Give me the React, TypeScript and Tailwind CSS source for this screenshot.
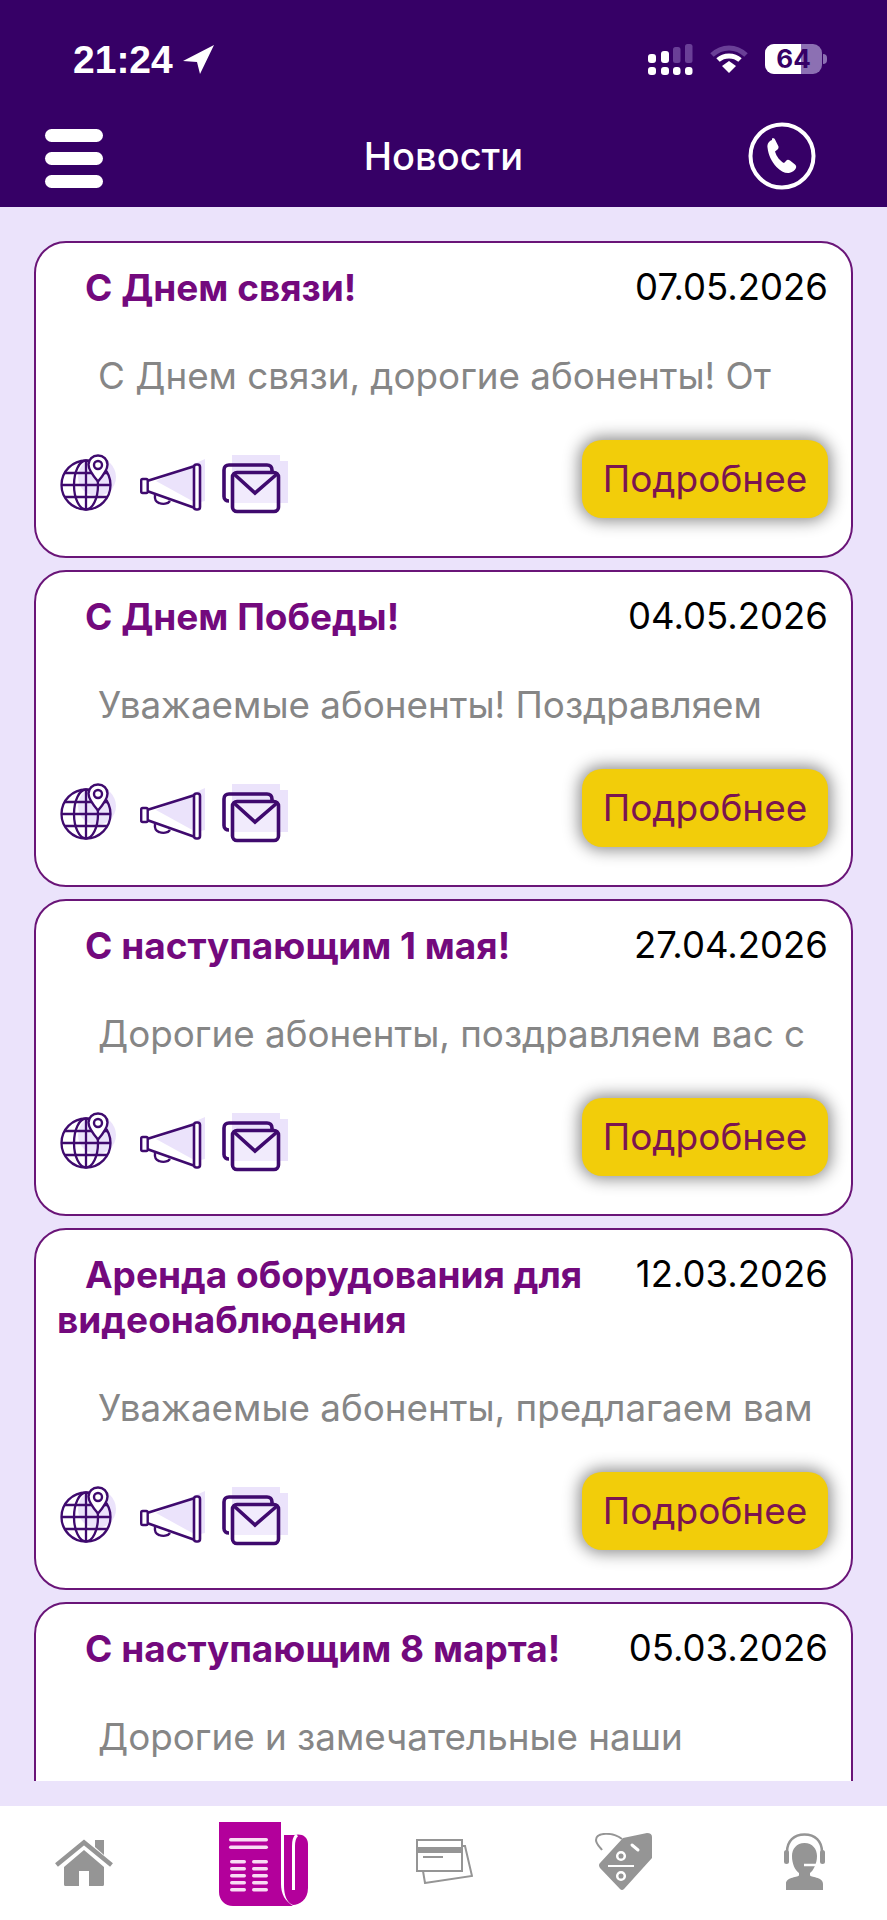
import React from "react";

const INK = "#3f0a6e";
const GREY = "#959595";

function Globe() {
  return (
    <svg width="56" height="58" viewBox="0 0 56 58" fill="none" className="mt-[1px] shrink-0">
      <circle cx="37" cy="23" r="19" fill="#ebe3fb" />
      <g stroke={INK} strokeWidth="2.300">
        <circle cx="26" cy="31" r="24.500" />
        <ellipse cx="26" cy="31" rx="12" ry="24.500" />
        <path d="M26 6.500v49M1.500 31h49M5 19h42M5 43h42" />
      </g>
      <path d="M38 1.500c-5.500 0-9.500 4-9.500 9 0 6 9.500 17 9.500 17s9.500-11 9.500-17c0-5-4-9-9.500-9z" fill="#fff" stroke={INK} strokeWidth="2.400" />
      <circle cx="38" cy="11" r="4" fill="#fff" stroke={INK} strokeWidth="2.400" />
    </svg>
  );
}

function Horn() {
  return (
    <svg width="66" height="56" viewBox="0 0 66 56" fill="none" className="mt-[4px] shrink-0">
      <path d="M16 24 L65 2 V44 L56 46 Z" fill="#ebe3fb" />
      <path d="M7 24 L55 9 M7 34 L55 51" stroke={INK} strokeWidth="2.600" />
      <rect x="1.200" y="22" width="6.500" height="14" rx="1.500" fill="#fff" stroke={INK} strokeWidth="2.400" />
      <rect x="54" y="7.500" width="6" height="45" rx="2.500" fill="#fff" stroke={INK} strokeWidth="2.600" />
      <path d="M15 38c-.5 4 1 7 4 8 4 1.500 9 1 11-2" stroke={INK} strokeWidth="2.400" />
    </svg>
  );
}

function Mail() {
  return (
    <svg width="70" height="62" viewBox="0 0 70 62" fill="none" className="shrink-0">
      <path d="M12 2H60V8H68V50H14V36H12Z" fill="#ebe3fb" />
      <path d="M9 48c-3 0-5-1.500-5-4.500V17c0-3 2-5 5-5h38c3 0 5 2 5 5v2" stroke={INK} strokeWidth="3.600" />
      <rect x="12.500" y="19.500" width="46" height="39" rx="4.500" fill="#fff" fillOpacity="0.3" stroke={INK} strokeWidth="3.600" />
      <path d="M14 21 L35 40 L57 21" stroke={INK} strokeWidth="3.600" />
    </svg>
  );
}

type News = { title: string; date: string; body: string; belowFold?: boolean };

function NewsCard({ title, date, body, belowFold }: News) {
  return (
    <article className="shrink-0 rounded-[32px] border-2 border-[#6a1578] bg-white pl-[21px] pr-[23px] pt-[22px] pb-[38px]">
      <div className="flex items-start justify-between gap-[12px]">
        <h2 className="indent-[28px] text-[37px] leading-[45px] font-bold text-[#73097d]">{title}</h2>
        <span className="shrink-0 text-[36.5px] leading-[45px] text-black">{date}</span>
      </div>
      <p className="mt-[43px] overflow-hidden whitespace-nowrap pl-[41px] text-[36.8px] leading-[45px] text-[#868686]">{body}</p>
      {belowFold ? (
        <div className="mt-[42px] flex justify-end">
          <div className="h-[78px] w-[246px] rounded-[20px] bg-[#f2cd0a] shadow-[0_0_16px_3px_rgba(0,0,0,0.45)]" />
        </div>
      ) : (
        <div className="mt-[42px] flex items-start justify-between">
          <div className="mt-[13px] flex items-start gap-[24px] pl-[3px]">
            <Globe />
            <div className="flex items-start gap-[14px]">
              <Horn />
              <Mail />
            </div>
          </div>
          <button className="flex h-[78px] w-[246px] items-center justify-center rounded-[20px] bg-[#f2cd0a] text-[37px] text-[#7b1450] shadow-[0_0_16px_3px_rgba(0,0,0,0.45)]">
            Подробнее
          </button>
        </div>
      )}
    </article>
  );
}

const NEWS: News[] = [
  { title: "С Днем связи!", date: "07.05.2026", body: "С Днем связи, дорогие абоненты! От" },
  { title: "С Днем Победы!", date: "04.05.2026", body: "Уважаемые абоненты! Поздравляем" },
  { title: "С наступающим 1 мая!", date: "27.04.2026", body: "Дорогие абоненты, поздравляем вас с" },
  { title: "Аренда оборудования для видеонаблюдения", date: "12.03.2026", body: "Уважаемые абоненты, предлагаем вам" },
  { title: "С наступающим 8 марта!", date: "05.03.2026", body: "Дорогие и замечательные наши", belowFold: true },
];

function StatusIcons() {
  return (
    <div className="flex items-center gap-[17px]">
      <svg width="45" height="31" viewBox="0 0 45 31" fill="#fff">
        <rect x="0" y="10" width="8" height="9" rx="3" />
        <rect x="13" y="7" width="8" height="12" rx="3" />
        <rect x="25" y="3" width="7.500" height="16" rx="2.500" fill="#6a3f97" />
        <rect x="37" y="0" width="7.500" height="19" rx="2.500" fill="#6a3f97" />
        <rect x="0" y="23" width="8" height="8" rx="3" />
        <rect x="13" y="23" width="8" height="8" rx="3" />
        <rect x="25" y="23" width="7.500" height="8" rx="3" />
        <rect x="37" y="23" width="7.500" height="8" rx="3" />
      </svg>
      <svg width="38" height="28" viewBox="0 0 38 28" fill="none">
        <path d="M2 10C12 0.500 26 0.500 36 10" stroke="#6a3f97" strokeWidth="5" />
        <path d="M8 15c6-5.500 16-5.500 22 0" stroke="#fff" strokeWidth="5" />
        <path d="M12 21l7-5 7 5-7 7z" fill="#fff" />
      </svg>
      <div className="flex items-center gap-[1px]">
        <div className="relative flex h-[30px] w-[57px] items-center justify-center overflow-hidden rounded-[9px] bg-[#8c70b3]">
          <div className="absolute inset-y-0 left-0 w-[36px] bg-white" />
          <span className="relative text-[26px] font-bold leading-none text-[#360066]">64</span>
        </div>
        <div className="h-[10px] w-[4px] rounded-r-full bg-[#8c70b3]" />
      </div>
    </div>
  );
}

function Home() {
  return (
    <svg width="58" height="47" viewBox="0 0 58 47" fill={GREY}>
      <path d="M40 1h9v15l-9-8z" />
      <path d="M1.500 26L29 3.500 56.500 26" fill="none" stroke={GREY} strokeWidth="4.500" />
      <path fillRule="evenodd" d="M9 28L29 11l20 17v17.500a1.500 1.500 0 0 1-1.500 1.500H34V32H24v15H10.500A1.500 1.500 0 0 1 9 45.500z" />
    </svg>
  );
}

function Paper() {
  return (
    <svg width="90" height="85" viewBox="0 0 90 85" fill="#b3009b">
      <path d="M0 0H62V62C62 72 66 79 74 84H14C6 84 0 78 0 70Z" />
      <path d="M65 13H75C82 11 89 14 89 22V66C89 78 80 83 74 83C68 81 65 73 65 64Z" />
      <path d="M78 13C74.500 16 74.500 20 74.500 24V68" fill="none" stroke="#fff" strokeWidth="3" />
      <g fill="#f9dcf4">
        <rect x="10" y="16" width="39" height="3.500" rx="1.700" />
        <rect x="10" y="23.500" width="39" height="3.500" rx="1.700" />
        {[38, 45, 52, 59, 66].map((y) => (
          <React.Fragment key={y}>
            <rect x="11" y={y} width="16" height="3.500" rx="1.700" />
            <rect x="33" y={y} width="16" height="3.500" rx="1.700" />
          </React.Fragment>
        ))}
      </g>
    </svg>
  );
}

function Cards() {
  return (
    <svg width="57" height="45" viewBox="0 0 57 45" fill="none" stroke={GREY} strokeWidth="2">
      <rect x="1" y="1" width="45" height="31" />
      <rect x="1" y="8" width="45" height="6" fill={GREY} stroke="none" />
      <path d="M7 18h20" />
      <path d="M46 7h3l7 30-47 7-2-12" />
    </svg>
  );
}

function Tag() {
  return (
    <svg width="58" height="58" viewBox="0 0 58 58" fill="none">
      <path fill={GREY} d="M28 5L52 0Q57 0 57 4V25L29 56Q27 58 25 56L5 35Q3 32 5 30Z" />
      <circle cx="26" cy="23" r="3.800" stroke="#fff" strokeWidth="2.500" />
      <circle cx="26" cy="43" r="3.800" stroke="#fff" strokeWidth="2.500" />
      <path d="M13 33h26" stroke="#fff" strokeWidth="2" />
      <path d="M37 12l6 5" stroke="#fff" strokeWidth="3" strokeLinecap="round" />
      <path d="M27 6C18-1 1-1 1 7c0 4 4 7 6 10" stroke={GREY} strokeWidth="2" />
    </svg>
  );
}

function Agent() {
  return (
    <svg width="41" height="57" viewBox="0 0 41 57" fill="none">
      <path d="M3 28V19C3 8 10 1.500 20.500 1.500S38 8 38 19v9" stroke={GREY} strokeWidth="2.500" />
      <rect x="0" y="17" width="5" height="14" rx="2.500" fill={GREY} />
      <rect x="36" y="17" width="5" height="14" rx="2.500" fill={GREY} />
      <path fill={GREY} d="M20.500 10c8 0 12.500 6 12.500 13 0 8-4 15-7 17v2c0 3 13 1 13 9v6H2v-6c0-8 13-6 13-9v-2c-4-3-7-9-7-17 0-7 4.500-13 12.500-13z" />
      <path d="M20 32h12" stroke="#fff" strokeWidth="2.500" />
    </svg>
  );
}

export default function App() {
  return (
    <div className="flex h-[1920px] w-[887px] flex-col overflow-hidden bg-[#ebe3fb] font-['Inter','Liberation_Sans',sans-serif]">
      <header className="flex h-[207px] shrink-0 flex-col bg-[#360066] text-white">
        <div className="flex h-[117px] items-center justify-between pl-[73px] pr-[60px] pt-[1px]">
          <div className="flex items-center gap-[10px]">
            <span className="font-['Liberation_Sans',sans-serif] text-[39px] font-bold leading-none">21:24</span>
            <svg width="31" height="29" viewBox="0 0 31 29" fill="#fff">
              <path d="M31 0L0 16l14 1 3 12z" />
            </svg>
          </div>
          <StatusIcons />
        </div>
        <div className="grid flex-1 grid-cols-[1fr_auto_1fr] items-start px-[45px]">
          <div className="mt-[12px] flex flex-col gap-[10px] justify-self-start">
            <div className="h-[13px] w-[58px] rounded-full bg-white" />
            <div className="h-[13px] w-[58px] rounded-full bg-white" />
            <div className="h-[13px] w-[58px] rounded-full bg-white" />
          </div>
          <h1 className="mt-[17px] text-[38px] font-medium leading-[44px]">Новости</h1>
          <svg width="70" height="70" viewBox="0 0 70 70" fill="none" className="mr-[25px] mt-[4px] justify-self-end">
            <circle cx="35" cy="35" r="31.500" stroke="#fff" strokeWidth="4" />
            <path d="M25 19c-3 1-5 4-4.500 7.500 1 8 4 14 9 19.500 4 4 8.500 6.500 12.500 6 3-.5 6-2.500 7-5 .5-1.500 0-2.500-1-3.500l-5-4c-1.500-1-3-1-4 .5l-2 2c-4-2-7.500-6.500-9-11.500l2.500-2c1-1 1.500-2.500.5-4l-3-6c-.5-1-1.500-1.500-3-1z" fill="#fff" />
          </svg>
        </div>
      </header>

      <main className="mb-[25px] flex min-h-0 flex-1 flex-col gap-[12px] overflow-hidden px-[34px] pt-[34px]">
        {NEWS.map((n) => (
          <NewsCard key={n.date} {...n} />
        ))}
      </main>

      <nav className="flex h-[114px] shrink-0 items-start gap-[90px] bg-white pl-[39px]">
        <div className="mt-[33px] flex w-[90px] justify-center"><Home /></div>
        <div className="mt-[16px] flex w-[90px] justify-center"><Paper /></div>
        <div className="mt-[33px] flex w-[90px] justify-center"><Cards /></div>
        <div className="mt-[27px] flex w-[90px] justify-center"><Tag /></div>
        <div className="mt-[27px] flex w-[90px] justify-center"><Agent /></div>
      </nav>
    </div>
  );
}
